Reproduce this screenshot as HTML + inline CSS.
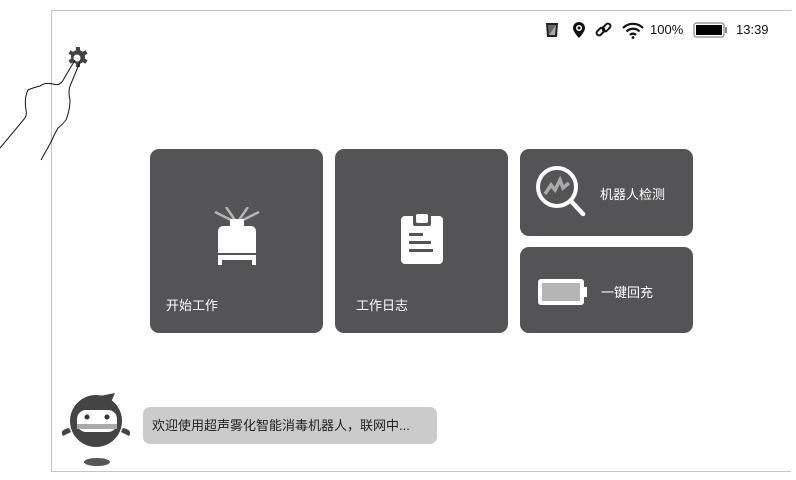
<!DOCTYPE html>
<html><head><meta charset="utf-8"><style>
body{margin:0;width:796px;height:480px;background:#fff;position:relative;overflow:hidden;font-family:"Liberation Sans","Noto Sans CJK SC",sans-serif}
.frame{position:absolute;left:51px;top:10px;width:739px;height:460px;border-left:1px solid #c4c4c4;border-top:1px solid #c4c4c4;border-bottom:1px solid #c4c4c4}
.tile{position:absolute;background:#545456;border-radius:9px;color:#fff;font-size:13px}
.lbl{position:absolute}
.bubble{position:absolute;left:143px;top:407px;width:294px;height:37px;background:#cbcbcb;border-radius:7px;font-size:13px;color:#222;line-height:37px;text-indent:9px}
.status{position:absolute;top:22px;font-size:13px;color:#111}
</style></head><body>
<div class="frame"></div>
<svg style="position:absolute;left:0;top:0" width="150" height="170">
<g fill="#444"><circle cx="78" cy="57" r="7"/><g stroke="#444" stroke-width="4"><line x1="78" y1="47" x2="78" y2="67"/><line x1="69.5" y1="52" x2="86.5" y2="62"/><line x1="69.5" y1="62" x2="86.5" y2="52"/></g></g>
<circle cx="77" cy="58" r="3.5" fill="#fff"/>
<path d="M75 60 L62 82 Q58 86 53 84 Q45 82 40 86 Q32 88 28 90 Q24 98 26 110 Q27 115 25 118 L0 148" fill="none" stroke="#111" stroke-width="1"/>
<path d="M80 62 L70 86 Q68 92 70 100 Q70 110 66 120 Q62 125 58 128 Q54 135 51 142 L41 160" fill="none" stroke="#111" stroke-width="1"/>
</svg>
<svg style="position:absolute;left:545px;top:22px" width="14" height="16"><path d="M1 1h12l-1 14H2z" fill="#222"/><path d="M3 3h8l-1 10H4z" fill="#aaa"/><path d="M3 3h8L4 13z" fill="#666"/></svg>
<svg style="position:absolute;left:571px;top:21px" width="16" height="18"><path d="M8 1a6 6 0 0 0-6 6c0 4 6 10 6 10s6-6 6-10a6 6 0 0 0-6-6z" fill="#111"/><circle cx="8" cy="7" r="3" fill="#fff"/><circle cx="8" cy="7" r="1.5" fill="#111"/></svg>
<svg style="position:absolute;left:595px;top:21px" width="18" height="18"><g fill="none" stroke="#111" stroke-width="2"><rect x="1" y="8" width="9" height="5" rx="2.5" transform="rotate(-45 5.5 10.5)"/><rect x="7" y="4" width="9" height="5" rx="2.5" transform="rotate(-45 11.5 6.5)"/></g></svg>
<svg style="position:absolute;left:621px;top:21px" width="24" height="18"><g fill="none" stroke="#111" stroke-width="2.2"><path d="M2 7a14 14 0 0 1 20 0"/><path d="M5.5 10.5a9 9 0 0 1 13 0"/><path d="M9 14a4 4 0 0 1 6 0"/></g><circle cx="12" cy="16.5" r="1.4" fill="#111"/></svg>
<div class="status" style="left:650px">100%</div>
<svg style="position:absolute;left:693px;top:22px" width="36" height="16"><rect x="1" y="1" width="30" height="14" rx="2.5" fill="#fff" stroke="#888" stroke-width="1.2"/><rect x="3" y="3" width="26" height="10" fill="#000"/><rect x="32" y="5" width="2" height="6" fill="#888"/></svg>
<div class="status" style="left:736px">13:39</div>

<div class="tile" style="left:150px;top:149px;width:173px;height:184px">
<svg style="position:absolute;left:64px;top:58px" width="46" height="62">
<g stroke="#b5b5b5" stroke-width="2.5"><line x1="23" y1="16" x2="1" y2="5"/><line x1="23" y1="16" x2="12" y2="0"/><line x1="23" y1="16" x2="34" y2="0"/><line x1="23" y1="16" x2="45" y2="5"/></g>
<rect x="16" y="12" width="14" height="8" fill="#fff"/>
<rect x="4" y="19" width="38" height="34" rx="5" fill="#fff"/>
<rect x="4" y="46" width="38" height="2" fill="#545456"/>
<rect x="4" y="48" width="4" height="10" fill="#fff"/><rect x="38" y="48" width="4" height="10" fill="#fff"/>
</svg>
<div class="lbl" style="left:16px;top:146px">开始工作</div></div>
<div class="tile" style="left:335px;top:149px;width:173px;height:184px">
<svg style="position:absolute;left:64px;top:60px" width="46" height="60">
<rect x="2" y="7" width="42" height="48" rx="4" fill="#fff"/>
<rect x="14" y="3" width="18" height="14" rx="2" fill="#545456"/>
<rect x="17" y="5" width="12" height="9" rx="2" fill="#fff"/>
<g fill="#545456"><rect x="10" y="24" width="14" height="3"/><rect x="10" y="32" width="22" height="3"/><rect x="10" y="40" width="24" height="3"/></g>
</svg>
<div class="lbl" style="left:21px;top:146px">工作日志</div></div>
<div class="tile" style="left:520px;top:149px;width:173px;height:87px">
<svg style="position:absolute;left:15px;top:15px" width="60" height="60">
<circle cx="22" cy="23" r="19" fill="none" stroke="#fff" stroke-width="4"/>
<line x1="36" y1="37" x2="48" y2="50" stroke="#fff" stroke-width="4.5" stroke-linecap="round"/>
<path d="M10 30 L16 21 L20 26 L25 16 L28 24 L34 19" fill="none" stroke="#aaa" stroke-width="3.5"/>
</svg>
<div class="lbl" style="left:80px;top:35px">机器人检测</div></div>
<div class="tile" style="left:520px;top:247px;width:173px;height:86px">
<svg style="position:absolute;left:16px;top:30px" width="56" height="30">
<rect x="2" y="2" width="46" height="26" rx="3" fill="#fff"/>
<rect x="6" y="6" width="38" height="18" fill="#b5b5b5"/>
<rect x="48" y="10" width="3" height="10" fill="#fff"/>
</svg>
<div class="lbl" style="left:81px;top:35px">一键回充</div></div>

<svg style="position:absolute;left:55px;top:390px" width="80" height="85">
<ellipse cx="42" cy="72" rx="13" ry="4" fill="#555"/>
<path d="M14 38 Q4 40 8 46 Q12 44 16 42z M68 38 Q78 40 74 46 Q70 44 66 42z" fill="#444"/>
<circle cx="41" cy="31" r="26" fill="#444"/>
<path d="M45 6 L60 3 L56 12z" fill="#444"/>
<rect x="22" y="20" width="40" height="22" rx="9" fill="#fff"/>
<rect x="22" y="34" width="40" height="5" fill="#aaa"/>
<circle cx="32" cy="27" r="2.5" fill="#333"/><circle cx="52" cy="27" r="2.5" fill="#333"/>
</svg>
<div class="bubble">欢迎使用超声雾化智能消毒机器人，联网中...</div>
</body></html>
